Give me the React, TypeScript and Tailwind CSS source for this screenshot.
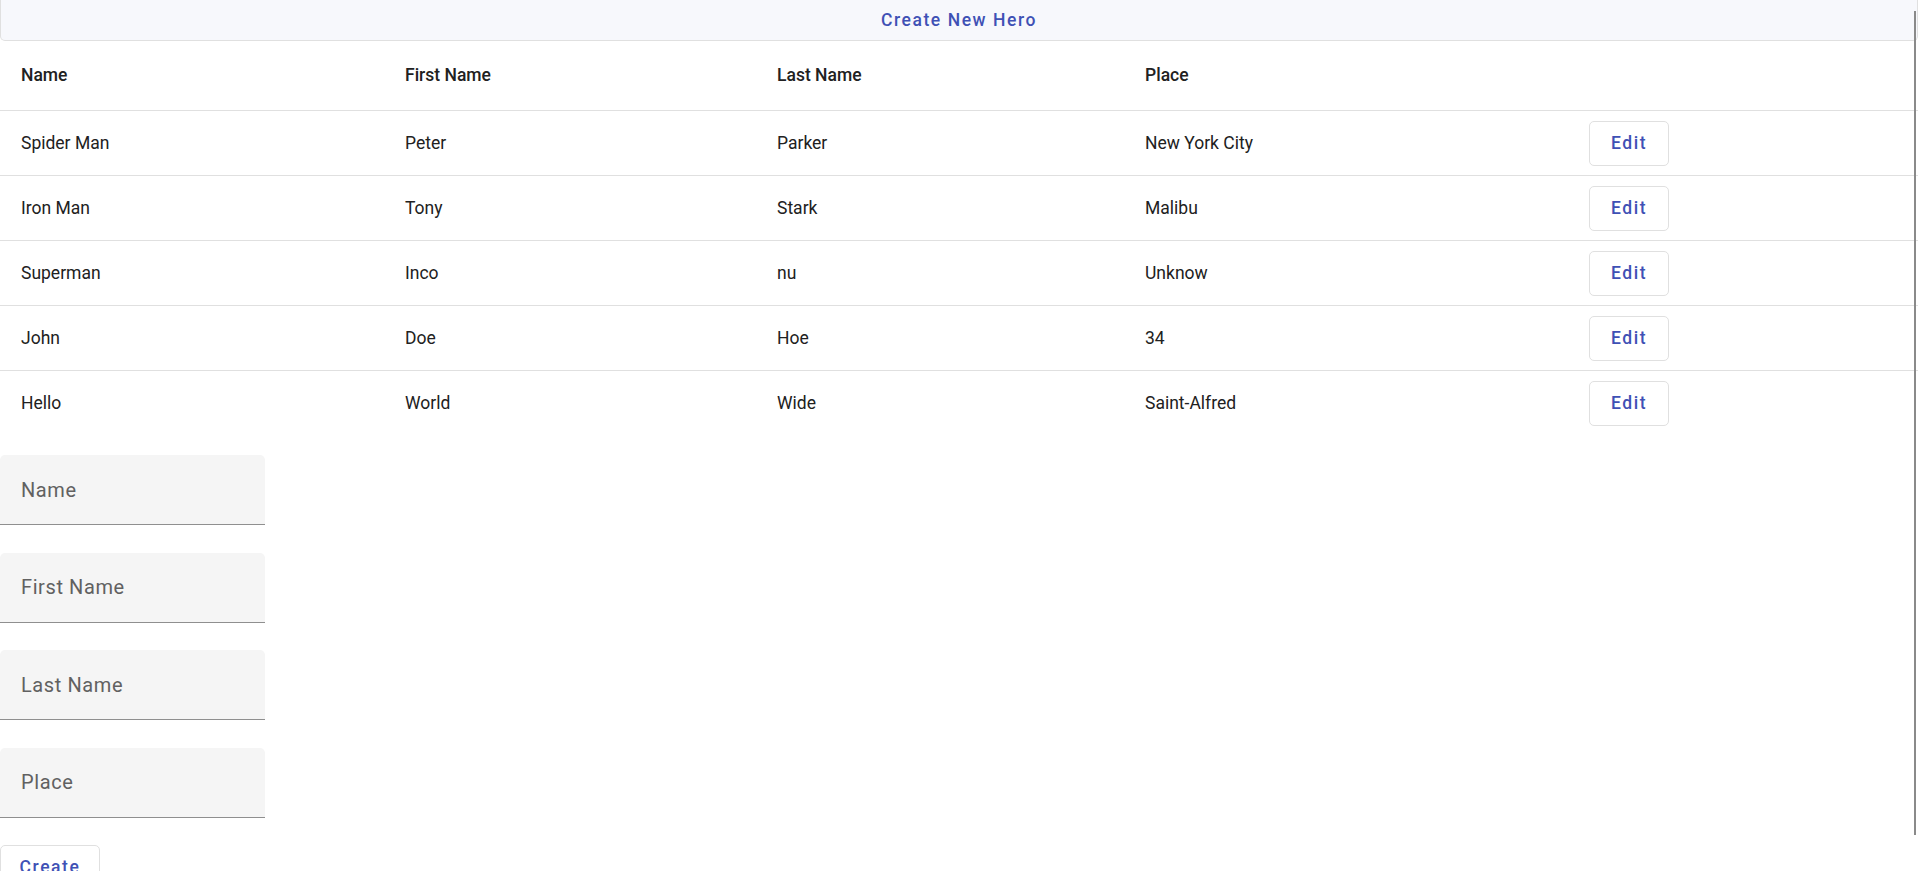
const heroes = [
  { name: 'Spider Man', firstName: 'Peter', lastName: 'Parker', place: 'New York City' },
  { name: 'Iron Man', firstName: 'Tony', lastName: 'Stark', place: 'Malibu' },
  { name: 'Superman', firstName: 'Inco', lastName: 'nu', place: 'Unknow' },
  { name: 'John', firstName: 'Doe', lastName: 'Hoe', place: '34' },
  { name: 'Hello', firstName: 'World', lastName: 'Wide', place: 'Saint-Alfred' },
];

const fields = ['Name', 'First Name', 'Last Name', 'Place'];

const cols = 'grid grid-cols-[384px_372px_368px_444px_1fr]';

const App: React.FC = () => {
  return (
    <div className="relative h-[871px] w-full overflow-hidden bg-white font-['Roboto',sans-serif] text-[17.5px] text-[#212121]">
      <button className="flex h-[41px] w-full items-center justify-center rounded-b-[5px] border border-t-0 border-[#e0e0e0] bg-[#f7f8fc] text-[17.5px] font-medium tracking-[0.089em] text-[#3f51b5]">
        Create New Hero
      </button>

      <div className={`${cols} h-[70px] items-center border-b border-[#e0e0e0] font-medium`}>
        <div className="pl-[21px]">Name</div>
        <div className="pl-[21px]">First Name</div>
        <div className="pl-[21px]">Last Name</div>
        <div className="pl-[21px]">Place</div>
        <div />
      </div>

      {heroes.map((hero, i) => (
        <div
          key={hero.name}
          className={`${cols} h-[65px] items-center ${i < heroes.length - 1 ? 'border-b border-[#e0e0e0]' : ''}`}
        >
          <div className="pl-[21px]">{hero.name}</div>
          <div className="pl-[21px]">{hero.firstName}</div>
          <div className="pl-[21px]">{hero.lastName}</div>
          <div className="pl-[21px]">{hero.place}</div>
          <div className="pl-[21px]">
            <button className="h-[45px] w-[80px] rounded-[5px] border border-[#e0e0e0] bg-white text-[17.5px] font-medium tracking-[0.089em] text-[#3f51b5]">
              Edit
            </button>
          </div>
        </div>
      ))}

      <form className="mt-[19px] flex flex-col">
        {fields.map((label) => (
          <div key={label} className="mb-[27.5px] flex h-[70px] w-[265px] items-center rounded-t-[5px] border-b border-[#8f8f8f] bg-[#f5f5f5] pl-[21px] text-[20px] tracking-[0.03em] text-[#616161]">
            {label}
          </div>
        ))}
        <button
          type="button"
          className="h-[45px] w-[100px] rounded-[5px] border border-[#e0e0e0] bg-white text-[17.5px] font-medium tracking-[0.089em] text-[#3f51b5]"
        >
          Create
        </button>
      </form>

      <div className="absolute right-[2px] top-[11px] h-[824px] w-[2px] bg-[#8a8a8a]" />
    </div>
  );
};

export default App;
